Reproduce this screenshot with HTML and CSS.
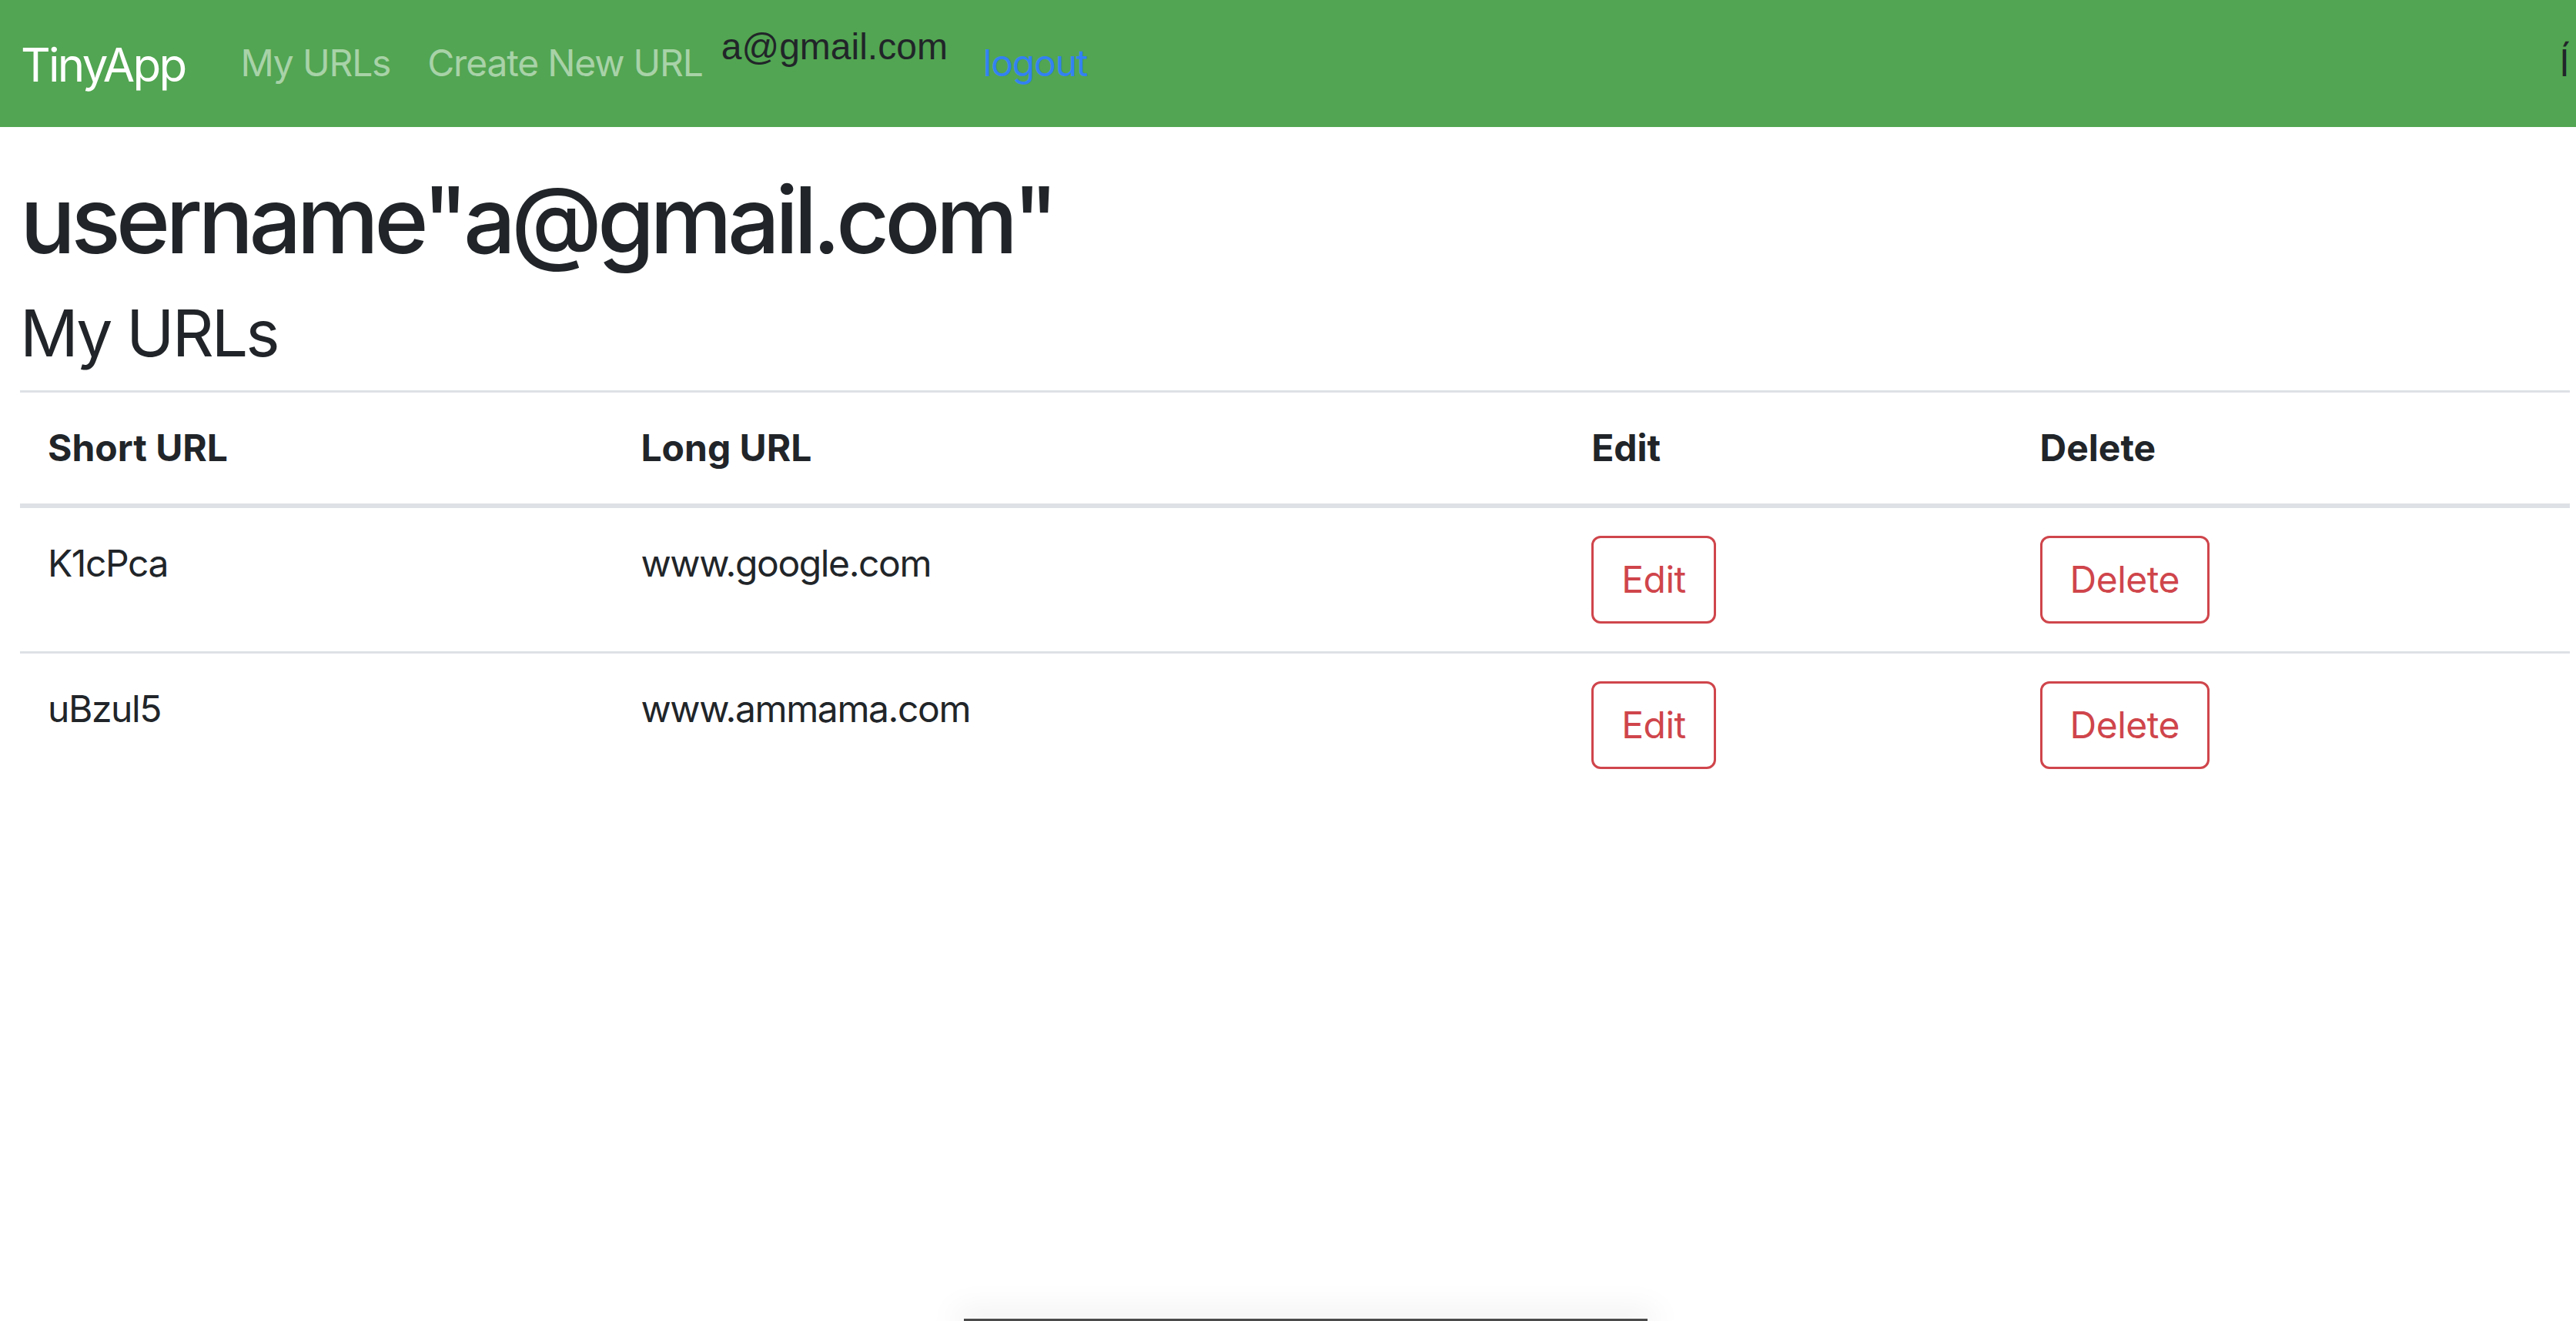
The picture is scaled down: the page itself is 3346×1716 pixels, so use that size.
FILE: index.html
```html
<!DOCTYPE html>
<html lang="en">
<head>
<meta charset="utf-8">
<title>TinyApp</title>
<link rel="stylesheet" href="styles.css">
</head>
<body>
<nav class="navbar">
  <a class="brand" href="#">TinyApp</a>
  <ul class="nav">
    <li><a class="nav-link" href="#">My URLs</a></li>
    <li><a class="nav-link" href="#">Create New URL</a></li>
  </ul>
  <span class="user-email">a@gmail.com</span>
  <a class="logout" href="#">logout</a>
  <span class="cut-glyph">Í</span>
</nav>
<main class="main">
  <h1 class="title">username"a@gmail.com"</h1>
  <h3 class="subtitle">My URLs</h3>
  <table class="table">
    <thead>
      <tr>
        <th class="col-short">Short URL</th>
        <th class="col-long">Long URL</th>
        <th class="col-edit">Edit</th>
        <th class="col-delete">Delete</th>
      </tr>
    </thead>
    <tbody>
      <tr>
        <td>K1cPca</td>
        <td>www.google.com</td>
        <td><a class="btn" href="#">Edit</a></td>
        <td><button class="btn" type="button">Delete</button></td>
      </tr>
      <tr>
        <td>uBzul5</td>
        <td>www.ammama.com</td>
        <td><a class="btn" href="#">Edit</a></td>
        <td><button class="btn" type="button">Delete</button></td>
      </tr>
    </tbody>
  </table>
</main>
<div class="dock-edge"></div>
</body>
</html>
```

FILE: styles.css
```css
html, body {
  margin: 0;
  padding: 0;
}
body {
  font-family: Inter, "Open Sans", sans-serif;
  font-size: 48px;
  line-height: 72px;
  letter-spacing: -1.4px;
  color: #212529;
  background: #fff;
  min-height: 1716px;
  overflow: hidden;
}
.navbar {
  display: flex;
  align-items: flex-start;
  height: 165px;
  box-sizing: border-box;
  background: #52a552;
  padding: 0 10px 0 27px;
}
.brand {
  font-size: 60px;
  line-height: 90px;
  letter-spacing: -2.7px;
  margin-top: 39px;
  color: #fff;
  text-decoration: none;
  margin-right: 48px;
}
.nav {
  display: flex;
  list-style: none;
  margin: 0;
  padding: 0;
}
.nav-link {
  display: block;
  padding: 46px 24px 0;
  letter-spacing: -1.2px;
  color: rgba(255, 255, 255, 0.5);
  text-decoration: none;
}
.user-email {
  font-family: "Liberation Sans", Arial, sans-serif;
  font-size: 48px;
  line-height: normal;
  letter-spacing: 0;
  margin-top: 33px;
  color: #212529;
}
.logout {
  margin-left: 46px;
  padding-top: 46px;
  letter-spacing: -1.2px;
  color: #3381f2;
  text-decoration: none;
}
.cut-glyph {
  margin-left: auto;
  padding-top: 46px;
  color: #212529;
}
.main {
  margin: 0 8px 0 26px;
  padding-top: 49px;
}
.title {
  font-size: 120px;
  font-weight: 500;
  line-height: 144px;
  letter-spacing: -6px;
  margin: 0 0 24px;
}
.subtitle {
  font-size: 84px;
  font-weight: 400;
  line-height: 101px;
  letter-spacing: -3px;
  margin: 0 0 24px;
}
.table {
  width: 100%;
  border-collapse: collapse;
}
.table th,
.table td {
  text-align: left;
  vertical-align: top;
  padding: 36px;
  border-top: 3px solid #dee2e6;
}
.table th {
  font-weight: 700;
  letter-spacing: 0;
}
.table thead th {
  border-bottom: 6px solid #dee2e6;
}
.table tbody tr:first-child td {
  border-top: 0;
}
.col-short { width: 698px; }
.col-long { width: 1162px; }
.col-edit { width: 510px; }
.col-delete { width: 652px; }
.btn {
  display: inline-block;
  font-family: inherit;
  font-size: 48px;
  line-height: 72px;
  letter-spacing: -0.5px;
  padding: 18px 36px;
  border: 3px solid #cf454b;
  border-radius: 12px;
  background: transparent;
  color: #cf454b;
  text-decoration: none;
  margin: 0;
  cursor: pointer;
}
.dock-edge {
  position: fixed;
  left: 1252px;
  bottom: 0;
  width: 888px;
  height: 3px;
  background: #4a4a4a;
  box-shadow: 0 0 40px 10px rgba(0, 0, 0, 0.08);
}
```
